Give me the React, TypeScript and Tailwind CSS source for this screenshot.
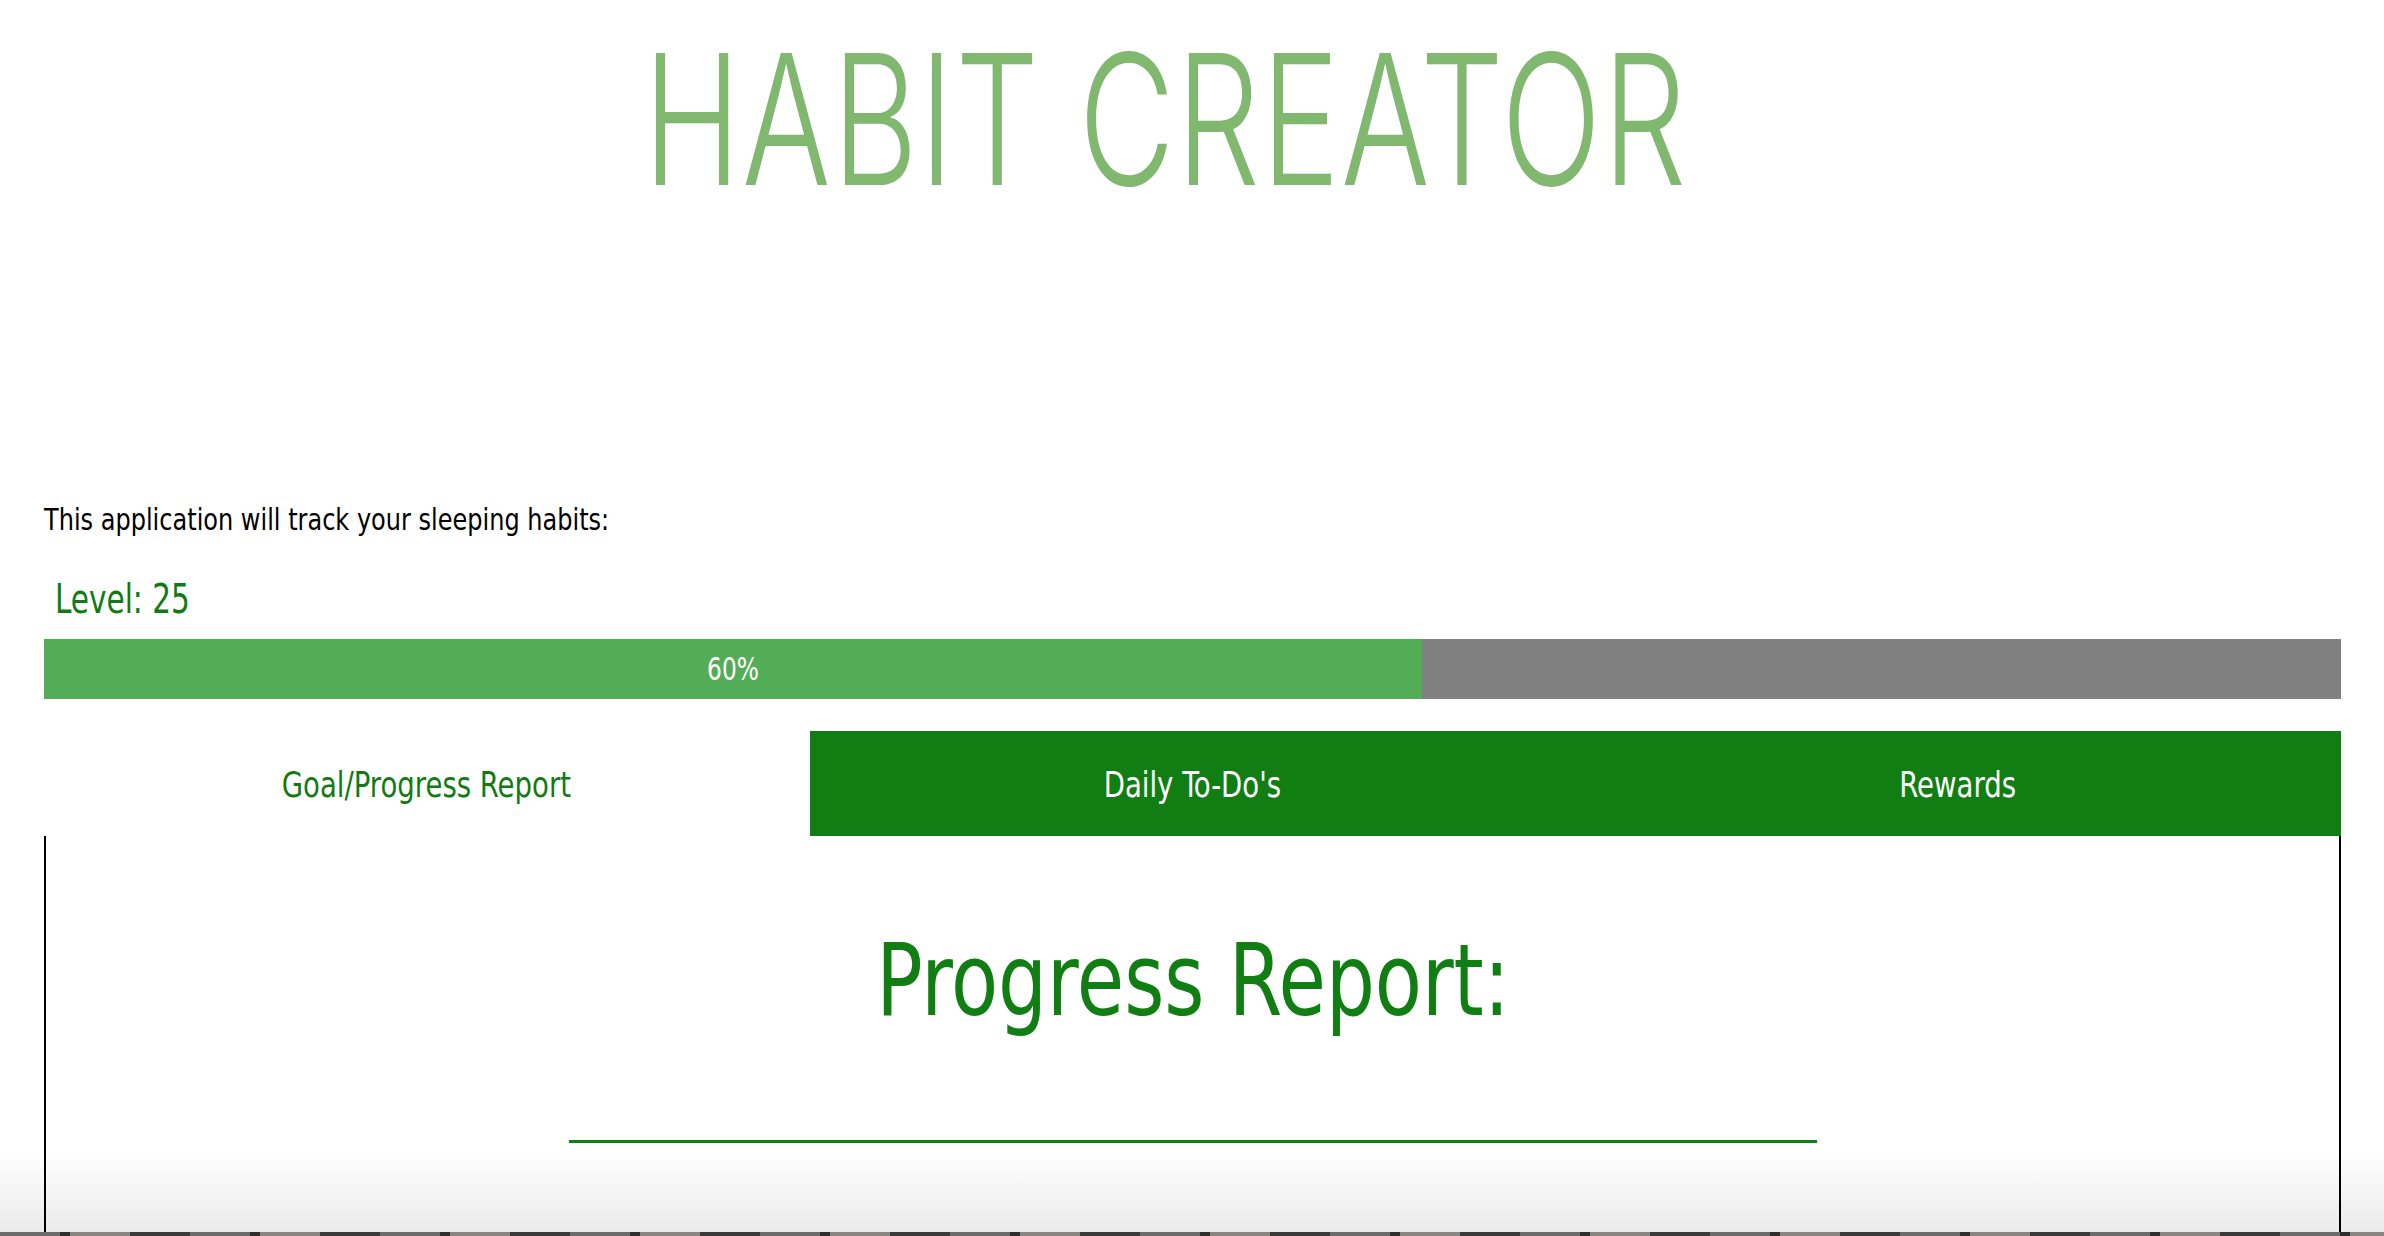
import React, { useState } from 'react';

const tabs = ['Goal/Progress Report', "Daily To-Do's", 'Rewards'];

const App = () => {
  const [active, setActive] = useState(0);
  const level = 25;
  const progress = 60;

  return (
    <div
      className="flex h-screen w-full flex-col bg-[linear-gradient(to_bottom,#ffffff_1150px,#ebebeb_1232px)] text-black"
      style={{ fontFamily: "'Liberation Sans Narrow', 'DejaVu Sans Condensed', 'Liberation Sans', sans-serif" }}
    >
      {/* header */}
      <div className="flex h-[505px] justify-center pr-[53px] pt-[28px]">
        <h1
          className="scale-x-[0.725] text-[182px] font-light leading-none tracking-[0.01em] text-[#80b870] whitespace-nowrap"
          style={{ fontFamily: "Inter, 'Open Sans', sans-serif" }}
        >
          HABIT CREATOR
        </h1>
      </div>

      <div className="pl-[44px] text-[30px] leading-none">
        <p className="origin-left scale-x-[0.89] whitespace-nowrap">This application will track your sleeping habits:</p>
      </div>

      <div className="mt-[44px] pl-[55px] text-[40px] leading-none text-[#137a13]">
        <p className="origin-left scale-x-[0.82] whitespace-nowrap">Level: {level}</p>
      </div>

      {/* level progress */}
      <div className="ml-[44px] mr-[43px] mt-[20px] flex h-[60px] bg-[#808080]">
        <div
          className="flex h-full items-center justify-center bg-[#52ad56] text-[32px] text-white"
          style={{ width: `${progress}%` }}
        >
          <span className="inline-block scale-x-[0.81]">{progress}%</span>
        </div>
      </div>

      {/* tabs */}
      <div className="ml-[44px] mr-[43px] mt-[32px] grid h-[105px] grid-cols-3">
        {tabs.map((t, i) => (
          <button
            key={t}
            onClick={() => setActive(i)}
            className={
              i === active
                ? 'flex items-center justify-center bg-white pt-[4px] text-[35px] text-[#137a13]'
                : 'flex items-center justify-center bg-[#107e12] pt-[4px] text-[35px] text-white'
            }
          >
            <span className="inline-block scale-x-[0.875] whitespace-nowrap">{t}</span>
          </button>
        ))}
      </div>

      <div className="ml-[44px] mr-[43px] flex flex-1 flex-col items-center border-x-2 border-black pt-[95px]">
        <h2 className="scale-x-[0.856] text-[100px] leading-none text-[#107e12] whitespace-nowrap">Progress Report:</h2>
        <div className="mt-[109px] h-[3px] w-[1248px] bg-[#107e12]" />
      </div>

      <div className="h-[4px] w-full bg-[repeating-linear-gradient(90deg,#6b6b6b_0px,#6b6b6b_60px,#2e2e2e_60px,#2e2e2e_70px,#8a8580_70px,#8a8580_130px,#3a3a3a_130px,#3a3a3a_190px)]" />
    </div>
  );
};

export default App;
